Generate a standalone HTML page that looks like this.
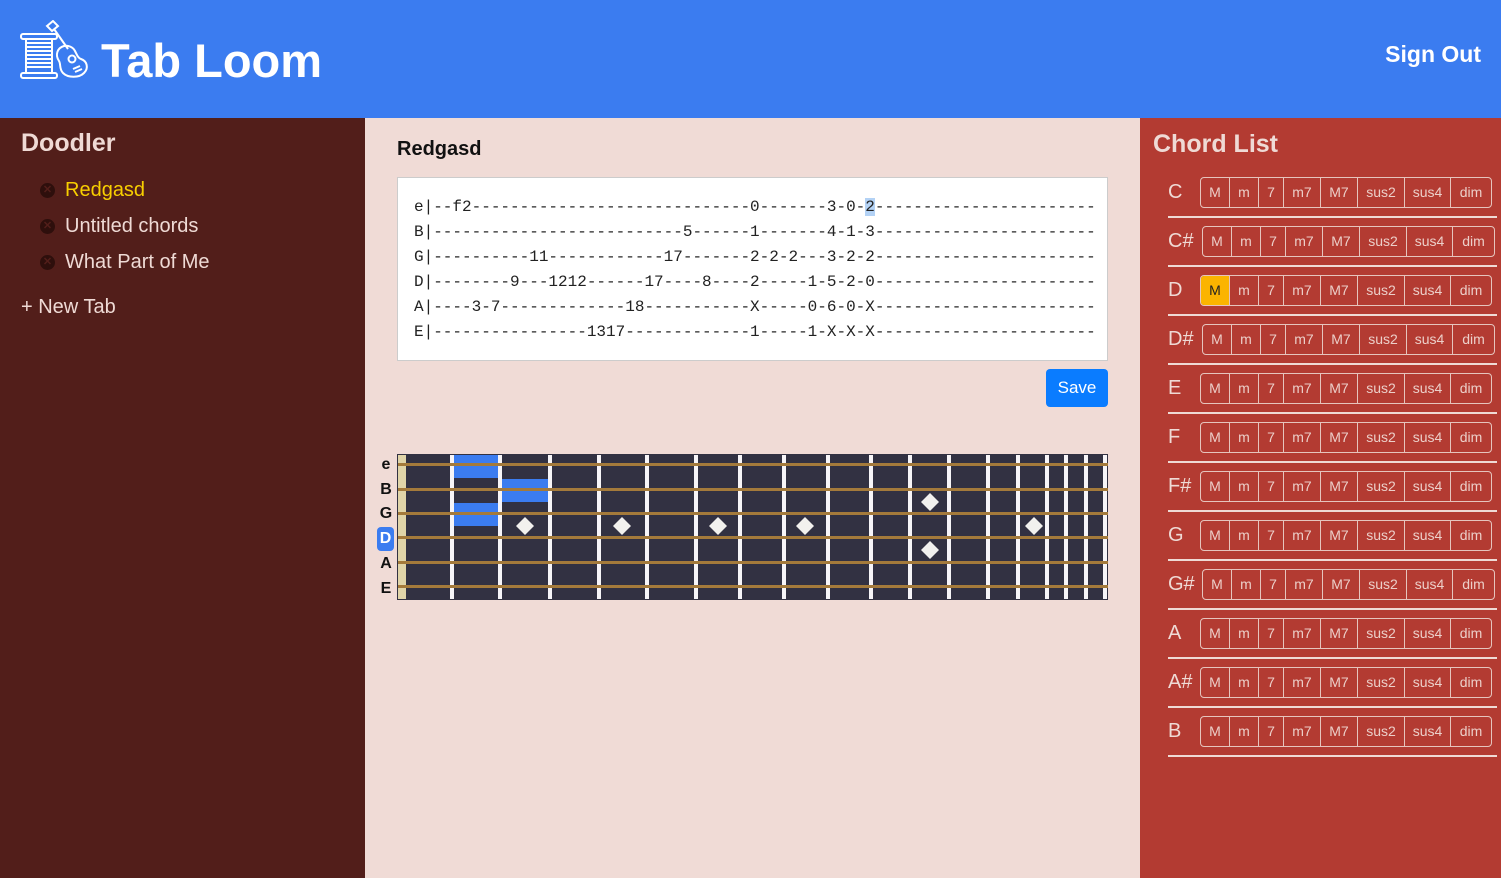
<!DOCTYPE html>
<html><head><meta charset="utf-8"><style>
*{box-sizing:border-box;margin:0;padding:0}
body{width:1501px;height:878px;overflow:hidden;font-family:"Liberation Sans",sans-serif;background:#f0dbd6;position:relative}
.hdr{position:absolute;left:0;top:0;width:1501px;height:118px;background:#3b7cf0}
.title{position:absolute;left:101px;top:33px;font-size:47px;font-weight:bold;color:#fff}
.signout{position:absolute;right:20px;top:41px;font-size:23px;font-weight:bold;color:#fff}
.side{position:absolute;left:0;top:118px;width:365px;height:760px;background:#521e1a;color:#efdad5}
.side h2{position:absolute;left:21px;top:11px;font-size:25px;font-weight:bold}
.item{position:absolute;left:40px;font-size:20px;display:flex;align-items:center}
.item .x{width:15px;height:15px;border-radius:50%;background:#2e0f0c;margin-right:10px;color:#521e1a;font-size:11px;line-height:15px;text-align:center;font-weight:bold}
.newtab{position:absolute;left:21px;top:178px;font-size:20px}
.mid h3{position:absolute;left:397px;top:138px;font-size:20px;font-weight:bold;color:#111}
.tab{position:absolute;left:397px;top:177px;width:711px;height:184px;background:#fff;border:1px solid #ccc}
.tab pre{position:absolute;left:16px;top:17px;font-family:"Liberation Mono",monospace;font-size:16px;line-height:25px;color:#222}
.hl{background:#b3d2f5}
.save{position:absolute;left:1046px;top:369px;width:62px;height:38px;background:#0a7cff;border-radius:4px;color:#fff;font-size:17px;text-align:center;line-height:38px}
.right{position:absolute;left:1140px;top:118px;width:361px;height:760px;background:#b33b32}
.right h2{position:absolute;left:13px;top:12px;font-size:25px;font-weight:bold;color:#efdad5}
.row{position:absolute;left:1140px;width:361px;height:49px}
.row .lab{position:absolute;left:28px;top:0;line-height:31px;font-size:20px;color:#efdad5}
.grp{position:absolute;top:0;height:31px;border:1px solid #e6c4bd;border-radius:4px;display:flex;overflow:hidden}
.grp span{height:29px;line-height:29px;text-align:center;color:#eccfc9;font-size:14px;border-right:1px solid #e6c4bd}
.grp span:last-child{border-right:none}
.grp span.on{background:#fbb400;color:#222}
.sep{position:absolute;left:28px;top:39px;width:329px;height:2px;background:#efdad5}
.slab{position:absolute;left:378px;font-size:16px;font-weight:bold;color:#111;width:16px;text-align:center}
</style></head><body>
<div class="hdr">
<svg style="position:absolute;left:18px;top:20px" width="80" height="62" viewBox="0 0 80 62" fill="none" stroke="#fff" stroke-width="2">
<rect x="3" y="14" width="36" height="5" rx="2"/><rect x="3" y="53" width="36" height="5" rx="2"/>
<rect x="8" y="19" width="26" height="34"/>
<path d="M8 23h26M8 27h26M8 31h26M8 35h26M8 39h26M8 43h26M8 47h26"/>
<path d="M29 6l6-5 5 5-6 5z"/><path d="M36 9l14 20"/>
<path d="M46 26c-7 2-9 9-5 15 2 3 0 8 4 12 5 5 16 5 21 0 5-5 3-12-3-14-3-1-4-4-6-8-2-4-7-6-11-5z"/>
<circle cx="54" cy="39" r="3.5"/><path d="M55 49l7-3M57 52l7-3"/>
</svg>
<div class="title">Tab Loom</div>
<div class="signout">Sign Out</div>
</div>
<div class="side">
<h2>Doodler</h2>
<div class="item" style="top:61px;color:#f8cf00"><span class="x">✕</span>Redgasd</div>
<div class="item" style="top:97px"><span class="x">✕</span>Untitled chords</div>
<div class="item" style="top:133px"><span class="x">✕</span>What Part of Me</div>
<div class="newtab">+ New Tab</div>
</div>
<div class="mid"><h3>Redgasd</h3></div>
<div class="tab"><pre>e|--f2-----------------------------0-------3-0-<span class="hl">2</span>-----------------------
B|--------------------------5------1-------4-1-3-----------------------
G|----------11------------17-------2-2-2---3-2-2-----------------------
D|--------9---1212------17----8----2-----1-5-2-0-----------------------
A|----3-7-------------18-----------X-----0-6-0-X-----------------------
E|----------------1317-------------1-----1-X-X-X-----------------------</pre></div>
<div class="save">Save</div>

<svg style="position:absolute;left:397px;top:454px" width="711" height="146" viewBox="397 454 711 146">
<rect x="397" y="454" width="711" height="146" fill="#323142" stroke="#323142"/>
<rect x="398" y="455" width="8" height="144" fill="#e0d4a8"/>
<g fill="#3b7cf0"><rect x="454" y="455" width="46" height="23"/><rect x="454" y="503" width="46" height="23"/><rect x="502" y="479" width="46" height="23"/></g>
<g fill="#f7f5f8">
<rect x="450" y="455" width="4" height="144"/><rect x="498" y="455" width="4" height="144"/><rect x="548" y="455" width="4" height="144"/><rect x="597" y="455" width="4" height="144"/><rect x="645" y="455" width="4" height="144"/><rect x="694" y="455" width="4" height="144"/><rect x="738" y="455" width="4" height="144"/><rect x="782" y="455" width="4" height="144"/><rect x="826" y="455" width="4" height="144"/><rect x="869" y="455" width="4" height="144"/><rect x="908" y="455" width="4" height="144"/><rect x="947" y="455" width="4" height="144"/><rect x="986" y="455" width="4" height="144"/><rect x="1016" y="455" width="4" height="144"/><rect x="1045" y="455" width="4" height="144"/><rect x="1064" y="455" width="4" height="144"/><rect x="1084" y="455" width="4" height="144"/><rect x="1103" y="455" width="4" height="144"/>
</g>
<g fill="#a47a3b"><rect x="398" y="463" width="710" height="3"/><rect x="398" y="488" width="710" height="3"/><rect x="398" y="512" width="710" height="3"/><rect x="398" y="536" width="710" height="3"/><rect x="398" y="561" width="710" height="3"/><rect x="398" y="585" width="710" height="3"/></g>
<g fill="#f2f1ee">
<path d="M525 517l9 9-9 9-9-9z"/><path d="M622 517l9 9-9 9-9-9z"/><path d="M718 517l9 9-9 9-9-9z"/><path d="M805 517l9 9-9 9-9-9z"/><path d="M930 493l9 9-9 9-9-9z"/><path d="M930 541l9 9-9 9-9-9z"/><path d="M1034 517l9 9-9 9-9-9z"/>
</g>
</svg>
<div class="slab" style="top:456px">e</div>
<div class="slab" style="top:481px">B</div>
<div class="slab" style="top:505px">G</div>
<div class="slab" style="top:527px;left:377px;width:17px;height:24px;line-height:24px;background:#3b7cf0;color:#fff;border-radius:4px">D</div>
<div class="slab" style="top:555px">A</div>
<div class="slab" style="top:580px">E</div>

<div class="right"><h2>Chord List</h2></div>
<div id="rows"></div>
<script>
var n=["C","C#","D","D#","E","F","F#","G","G#","A","A#","B"];
var off=[1200,1202,1200,1202,1200,1200,1200,1200,1202,1200,1200,1200];
var b=["M","m","7","m7","M7","sus2","sus4","dim"],w=[29,29,25,37,37,47,46,41];
var h="";
for(var i=0;i<12;i++){
var g="";for(var j=0;j<8;j++){g+='<span'+(i==2&&j==0?' class="on"':'')+' style="width:'+(j==7?(off[i]==1202?41:40):w[j])+'px">'+b[j]+'</span>';}
h+='<div class="row" style="top:'+(177+49*i)+'px"><div class="lab">'+n[i]+'</div><div class="grp" style="left:'+(off[i]-1140)+'px">'+g+'</div><div class="sep"></div></div>';}
document.getElementById("rows").innerHTML=h;
</script>
</body></html>
